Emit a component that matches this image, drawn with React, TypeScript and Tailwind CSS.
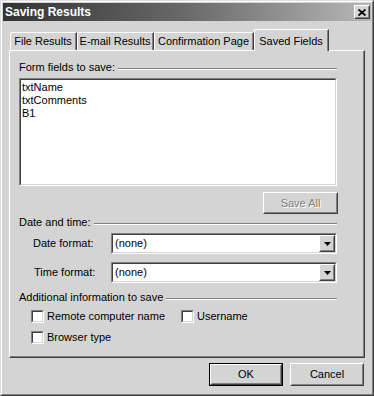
import type { ReactNode } from "react";

// classic 3D bevels
function Raised({ className = "", children }: { className?: string; children?: ReactNode }) {
  return (
    <div className={`border border-t-white border-l-white border-r-[#404040] border-b-[#404040] ${className}`}>
      <div className="flex h-full w-full items-center justify-center border border-t-[#d4d4d4] border-l-[#d4d4d4] border-r-[#808080] border-b-[#808080]">
        {children}
      </div>
    </div>
  );
}

function Sunken({ className = "", inner = "", children }: { className?: string; inner?: string; children?: ReactNode }) {
  return (
    <div className={`border border-t-[#808080] border-l-[#808080] border-r-white border-b-white ${className}`}>
      <div className={`h-full w-full border border-t-[#404040] border-l-[#404040] border-r-[#d4d4d4] border-b-[#d4d4d4] bg-white ${inner}`}>
        {children}
      </div>
    </div>
  );
}

function GroupHeader({ label }: { label: string }) {
  return (
    <div className="flex h-[13px] items-center gap-[3px] pr-[2px]">
      <span className="leading-[13px] whitespace-nowrap">{label}</span>
      <div className="mt-[2px] flex-1 border-t border-b border-t-[#808080] border-b-white" />
    </div>
  );
}

function Select({ value }: { value: string }) {
  return (
    <Sunken className="h-[21px] w-[226px]" inner="flex items-center">
      <span className="flex-1 pl-[2px] leading-[13px]">{value}</span>
      <Raised className="h-[17px] w-[16px] bg-[#d4d4d4]">
        <svg width="7" height="4" viewBox="0 0 7 4">
          <path d="M0 0h7L3.5 4z" fill="#000" />
        </svg>
      </Raised>
    </Sunken>
  );
}

function Check({ label }: { label: string }) {
  return (
    <div className="flex h-[13px] items-center gap-[3px]">
      <Sunken className="h-[13px] w-[13px]" />
      <span className="leading-[13px]">{label}</span>
    </div>
  );
}

const tabs = [
  { name: "File Results", w: "w-[67px]" },
  { name: "E-mail Results", w: "w-[77px]" },
  { name: "Confirmation Page", w: "w-[100px]" },
];

export default function App() {
  return (
    <div className="h-[396px] w-[374px] border border-t-[#dfdfdf] border-l-[#dfdfdf] border-r-[#404040] border-b-[#404040] bg-[#d4d4d4] text-[11px] text-black [font-family:'Liberation_Sans',Arial,sans-serif]">
      <div className="h-full w-full border border-t-white border-l-white border-r-[#808080] border-b-[#808080] p-px">
        {/* title bar */}
        <div className="flex h-[18px] items-center justify-between bg-linear-to-r from-[#343434] via-[#6a6a6a] to-[#b8b8b8] pl-[2px] pr-[1px]">
          <span className="text-[12px] font-bold text-white">Saving Results</span>
          <Raised className="h-[14px] w-[16px] bg-[#d4d4d4]">
            <svg width="8" height="7" viewBox="0 0 8 7">
              <path d="M0.5 0.5L7.5 6.5M7.5 0.5L0.5 6.5" stroke="#000" strokeWidth="1.8" />
            </svg>
          </Raised>
        </div>

        {/* tabs */}
        <div className="mt-[8px] flex h-[21px] items-end pl-[7px]">
          {tabs.map((t) => (
            <div
              key={t.name}
              className={`${t.w} h-[18px] rounded-tl-[2px] border-t border-l border-r border-t-white border-l-white border-r-[#404040]`}
            >
              <div className="flex h-full items-center justify-center border-r border-r-[#808080]">{t.name}</div>
            </div>
          ))}
          <div className="relative z-10 -mb-px h-[22px] w-[75px] rounded-tl-[2px] border-t border-l border-r border-t-white border-l-white border-r-[#404040] bg-[#d4d4d4]">
            <div className="flex h-full items-start justify-center border-r border-r-[#808080] pt-[3px]">Saved Fields</div>
          </div>
        </div>

        {/* panel */}
        <div className="ml-[6px] h-[308px] w-[356px] border-t border-l border-r border-b border-t-white border-l-white border-r-[#404040] border-b-[#404040]">
          <div className="h-full w-full border-r border-b border-r-[#808080] border-b-[#808080] pl-[9px] pr-[24px] pt-[10px]">
            <GroupHeader label="Form fields to save:" />
            <Sunken className="mt-[4px] h-[108px] w-[318px]" inner="px-px pt-px leading-[13px]">
              <div>txtName</div>
              <div>txtComments</div>
              <div>B1</div>
            </Sunken>
            <div className="mt-[6px] flex justify-end pr-px">
              <Raised className="h-[22px] w-[75px]">
                <span className="text-[#808080] [text-shadow:1px_1px_0_#fff]">Save All</span>
              </Raised>
            </div>

            <div className="mt-[2px]">
              <GroupHeader label="Date and time:" />
            </div>
            <div className="mt-[4px] flex items-center pl-[14px]">
              <span className="w-[78px]">Date format:</span>
              <Select value="(none)" />
            </div>
            <div className="mt-[8px] flex items-center pl-[15px]">
              <span className="w-[77px]">Time format:</span>
              <Select value="(none)" />
            </div>

            <div className="mt-[8px]">
              <GroupHeader label="Additional information to save" />
            </div>
            <div className="mt-[6px] flex pl-[12px]">
              <div className="w-[150px]">
                <Check label="Remote computer name" />
              </div>
              <Check label="Username" />
            </div>
            <div className="mt-[8px] pl-[12px]">
              <Check label="Browser type" />
            </div>
          </div>
        </div>

        {/* buttons */}
        <div className="mt-[5px] flex justify-end gap-[7px] pr-[7px]">
          <div className="h-[23px] w-[74px] border border-black">
            <Raised className="h-full w-full">OK</Raised>
          </div>
          <Raised className="h-[23px] w-[74px]">Cancel</Raised>
        </div>
      </div>
    </div>
  );
}
